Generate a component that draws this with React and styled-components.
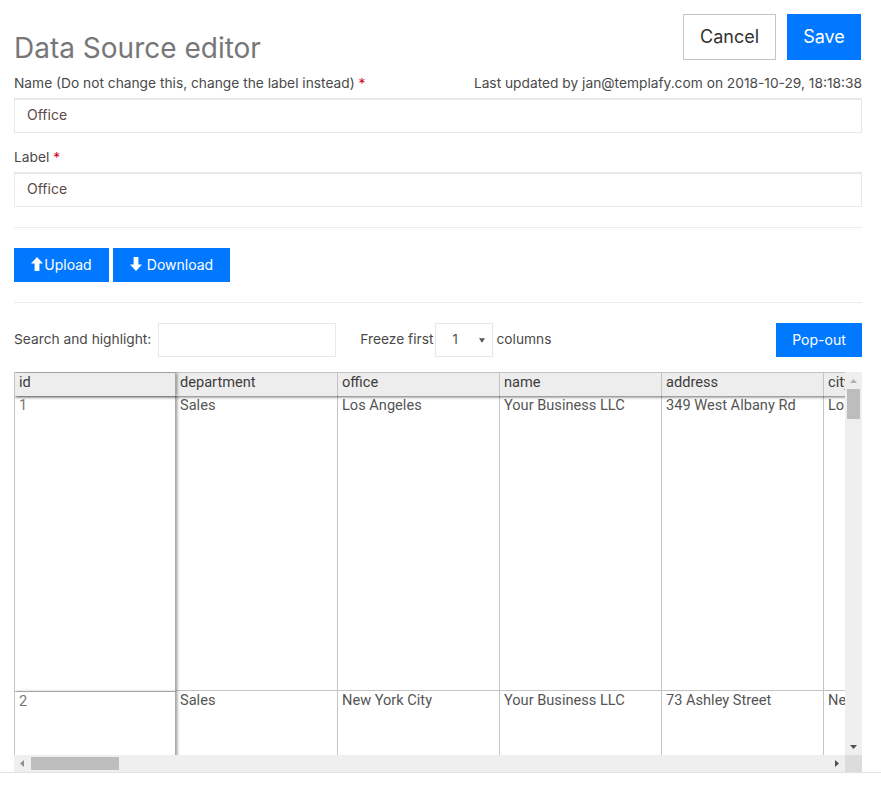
import React from 'react'
import styled, { createGlobalStyle } from 'styled-components'

const columns = ['department', 'office', 'name', 'address', 'city']
const rows = [
  { id: 1, department: 'Sales', office: 'Los Angeles', name: 'Your Business LLC', address: '349 West Albany Rd', city: 'Los Angeles' },
  { id: 2, department: 'Sales', office: 'New York City', name: 'Your Business LLC', address: '73 Ashley Street', city: 'New York City' },
]

const ArrowUp = () => (
  <svg width="12" height="14" viewBox="0 0 12 14"><path d="M6 0 12 6.5H8.4V14H3.6V6.5H0Z" fill="currentColor" /></svg>
)
const ArrowDown = () => (
  <svg width="12" height="14" viewBox="0 0 12 14"><path d="M6 14 0 7.5H3.6V0H8.4V7.5H12Z" fill="currentColor" /></svg>
)

const App = () => {
  return (
    <Page>
      <GlobalStyle />
      <Header>
        <Title>Data Source editor</Title>
        <HeaderActions>
          <BigButton>Cancel</BigButton>
          <BigButton primary>Save</BigButton>
        </HeaderActions>
      </Header>

      <LabelRow>
        <Label>Name (Do not change this, change the label instead) <Star>*</Star></Label>
        <Label>Last updated by jan@templafy.com on 2018-10-29, 18:18:38</Label>
      </LabelRow>
      <TextInput readOnly value="Office" />

      <LabelRow second>
        <Label>Label <Star>*</Star></Label>
      </LabelRow>
      <TextInput readOnly value="Office" />

      <Divider />

      <ButtonRow>
        <SmallButton width="95px" gap="1px"><ArrowUp />Upload</SmallButton>
        <SmallButton width="117px" gap="5px"><ArrowDown />Download</SmallButton>
      </ButtonRow>

      <Divider />

      <Toolbar>
        <Label>Search and highlight:</Label>
        <SearchInput readOnly />
        <FreezeLabel>Freeze first</FreezeLabel>
        <FreezeSelect>
          1
          <Caret viewBox="0 0 7 5"><path d="M0 0H7L3.5 5Z" fill="#555" /></Caret>
        </FreezeSelect>
        <Label>columns</Label>
        <PopOut>Pop-out</PopOut>
      </Toolbar>

      <TableFrame>
        <Viewport>
          <HeaderRow>
            <FrozenHead>id</FrozenHead>
            {columns.map(col => <HeadCell key={col}>{col}</HeadCell>)}
          </HeaderRow>
          {rows.map((row, i) => (
            <BodyRow key={row.id}>
              <FrozenCell first={i === 0}>{row.id}</FrozenCell>
              {columns.map(col => <BodyCell key={col} first={i === 0}>{row[col]}</BodyCell>)}
            </BodyRow>
          ))}
        </Viewport>

        <VerticalBar>
          <svg width="7" height="4" viewBox="0 0 7 4"><path d="M3.5 0 7 4H0Z" fill="#b0b0b0" /></svg>
          <VerticalThumb />
          <svg width="7" height="4" viewBox="0 0 7 4"><path d="M0 0H7L3.5 4Z" fill="#505050" /></svg>
        </VerticalBar>

        <HorizontalBar>
          <svg width="4" height="7" viewBox="0 0 4 7"><path d="M4 0V7L0 3.5Z" fill="#909090" /></svg>
          <HorizontalThumb />
          <svg width="4" height="7" viewBox="0 0 4 7"><path d="M0 0V7L4 3.5Z" fill="#505050" /></svg>
        </HorizontalBar>
        <BarCorner />
      </TableFrame>
      <BottomLine />
    </Page>
  )
}

export default App

const GlobalStyle = createGlobalStyle`
  html, body {
    margin: 0;
    padding: 0;
    background: #fff;
  }
  body {
    font-family: Inter, 'Open Sans', sans-serif;
    color: #4a4a4a;
  }
`

const Page = styled.div`
  width: 881px;
  height: 797px;
  box-sizing: border-box;
  padding: 14px 19px 0 14px;
  overflow: hidden;
  display: flex;
  flex-direction: column;
`

const Header = styled.div`
  display: flex;
  justify-content: space-between;
  height: 46px;
`

const Title = styled.h1`
  margin: 16px 0 0;
  font-size: 28px;
  line-height: 36px;
  font-weight: 400;
  color: #777;
`

const HeaderActions = styled.div`
  display: flex;
  gap: 11px;
  margin-right: 1px;
`

const BigButton = styled.button`
  box-sizing: border-box;
  height: 46px;
  width: ${props => props.primary ? '74px' : '93px'};
  font: 400 18px Inter, sans-serif;
  color: ${props => props.primary ? '#fff' : '#333'};
  background: ${props => props.primary ? '#0078ff' : '#fff'};
  border: 1px solid ${props => props.primary ? '#0078ff' : '#c4c4c4'};
  padding: 0 0 2px;
`

const LabelRow = styled.div`
  display: flex;
  justify-content: space-between;
  align-items: center;
  height: 18px;
  margin-top: ${props => props.second ? '15px' : '14px'};
  margin-bottom: 6px;
`

const Label = styled.span`
  font-size: 13.75px;
  line-height: 18px;
  color: #4a4a4a;
  white-space: nowrap;
`

const Star = styled.span`
  color: #d0021b;
`

const TextInput = styled.input`
  box-sizing: border-box;
  width: 100%;
  height: 35px;
  flex: none;
  padding: 0 12px 4px;
  border: 1px solid #e8e8e8;
  border-top-width: 2px;
  font: 400 14px Inter, sans-serif;
  color: #5b4a45;
  outline: none;
`

const Divider = styled.div`
  flex: none;
  height: 1px;
  background: #ececec;
  margin: 20px 0;
`

const ButtonRow = styled.div`
  display: flex;
  gap: 4px;
`

const SmallButton = styled.button`
  box-sizing: border-box;
  width: ${props => props.width};
  height: 34px;
  display: flex;
  align-items: center;
  justify-content: center;
  gap: ${props => props.gap};
  padding: 0 0 2px;
  border: none;
  background: #0078ff;
  color: #fff;
  font: 400 14px Inter, sans-serif;
`

const Toolbar = styled.div`
  display: flex;
  align-items: center;
  height: 34px;
  flex: none;

  & > span {
    position: relative;
    top: -1px;
  }
`

const SearchInput = styled.input`
  box-sizing: border-box;
  width: 178px;
  height: 34px;
  margin-left: 7px;
  border: 1px solid #e8e8e8;
  outline: none;
`

const FreezeLabel = styled(Label)`
  margin-left: 24px;
`

const FreezeSelect = styled.div`
  position: relative;
  box-sizing: border-box;
  width: 58px;
  height: 34px;
  margin: 0 3px 0 2px;
  padding-left: 16px;
  border: 1px solid #e8e8e8;
  font-size: 13px;
  line-height: 31px;
  color: #4f4f4f;
`

const Caret = styled.svg`
  position: absolute;
  right: 7px;
  top: 14px;
  width: 6px;
  height: 5px;
`

const PopOut = styled.button`
  width: 86px;
  height: 34px;
  margin-left: auto;
  padding: 0 0 2px;
  border: none;
  background: #0078ff;
  color: #fff;
  font: 400 14px Inter, sans-serif;
`

const TableFrame = styled.div`
  display: grid;
  grid-template-columns: 831px 17px;
  grid-template-rows: 383px 17px;
  margin-top: 15px;
  flex: none;
`

const BottomLine = styled.div`
  flex: none;
  height: 1px;
  margin: 0 -19px 0 -14px;
  background: #e2e2e2;
`

const Viewport = styled.div`
  overflow: hidden;
  box-sizing: border-box;
  border-left: 1px solid #c4c4c4;
  font-family: Roboto, sans-serif;
  font-size: 14.6px;
`

const HeaderRow = styled.div`
  display: flex;
  height: 24px;
  box-sizing: border-box;
  border-top: 1px solid #c4c4c4;
  background: #ededed;
  color: #3d3d3d;
  box-shadow: 0 1px 3px rgba(0, 0, 0, 0.6);
  position: relative;
  z-index: 1;
  width: 1000px;
`

const HeadCell = styled.div`
  flex: none;
  box-sizing: border-box;
  width: 162px;
  padding: 0 0 0 4px;
  line-height: 18px;
  border-right: 1px solid #c4c4c4;
  white-space: nowrap;
`

const FrozenHead = styled(HeadCell)`
  width: 161px;
  border-right: 1px solid #aaa;
  box-shadow: 1px 0 3px rgba(0, 0, 0, 0.45);
  position: relative;
`

const BodyRow = styled.div`
  display: flex;
  width: 1000px;
`

const BodyCell = styled.div`
  flex: none;
  box-sizing: border-box;
  width: 162px;
  height: ${props => props.first ? '295px' : '70px'};
  margin-top: ${props => props.first ? '0' : '-1px'};
  padding: 0 0 0 4px;
  line-height: 18px;
  color: #555;
  border-right: 1px solid #c4c4c4;
  border-bottom: ${props => props.first ? '1px solid #c4c4c4' : 'none'};
  white-space: nowrap;
  overflow: hidden;
`

const FrozenCell = styled(BodyCell)`
  width: 161px;
  height: ${props => props.first ? '296px' : '70px'};
  margin-top: 0;
  color: #777;
  border-right: 1px solid #aaa;
  background: #fff;
  position: relative;
  box-shadow: 1px 0 3px rgba(0, 0, 0, 0.45);
`

const VerticalBar = styled.div`
  background: #efefef;
  display: flex;
  flex-direction: column;
  align-items: center;
  padding: 7px 0 6px;
  box-sizing: border-box;
`

const VerticalThumb = styled.div`
  width: 13px;
  height: 30px;
  margin-top: 6px;
  margin-bottom: auto;
  background: #bdbdbd;
`

const HorizontalBar = styled.div`
  background: #efefef;
  display: flex;
  align-items: center;
  padding: 0 6px;
`

const HorizontalThumb = styled.div`
  width: 88px;
  height: 13px;
  margin-left: 7px;
  margin-right: auto;
  background: #bdbdbd;
`

const BarCorner = styled.div`
  background: #dcdcdc;
`
